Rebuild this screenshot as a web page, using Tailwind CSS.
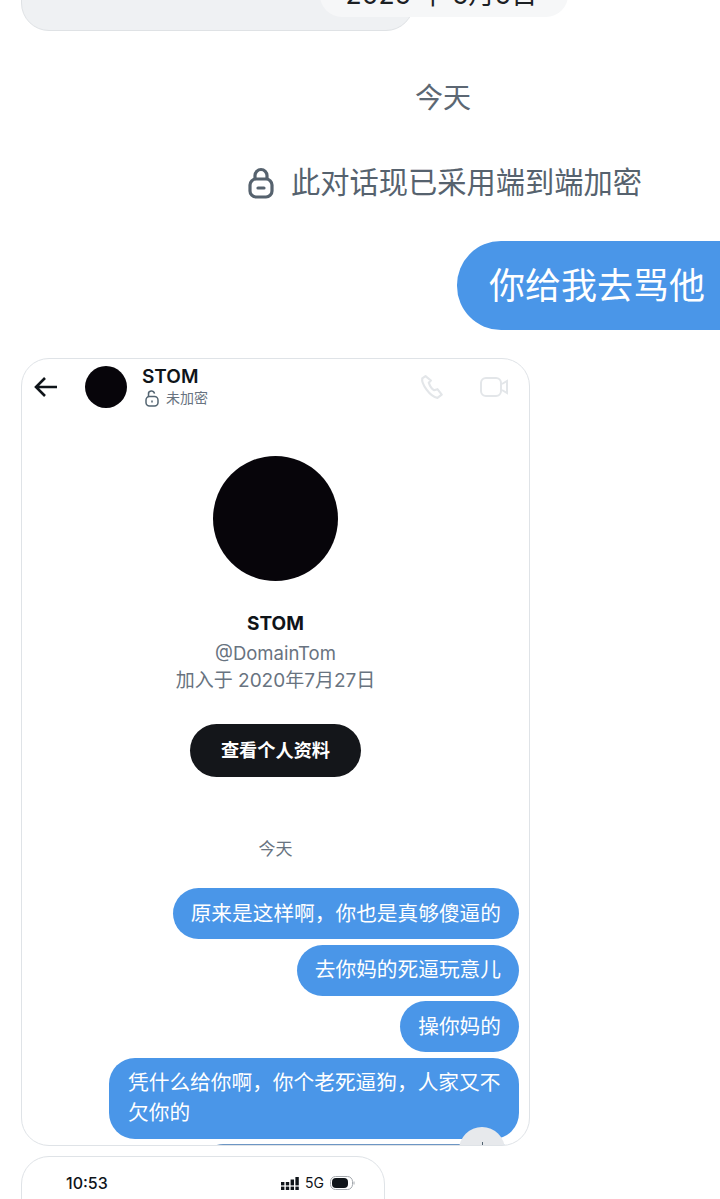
<!DOCTYPE html>
<html lang="zh">
<head>
  <meta charset="UTF-8" />
  <title>聊天记录</title>
  <script src="https://cdn.jsdelivr.net/npm/@tailwindcss/browser@4"></script>
</head>
<body class="bg-white">
  <div class="relative w-[720px] h-[1199px] overflow-hidden font-['Inter','Noto_Sans_CJK_SC',sans-serif]">

    <!-- Top screenshot card, cut off by the window -->
    <div class="relative h-[31px] mb-[49px]">
      <div class="absolute left-[21px] bottom-0 w-[393px] h-[60px] bg-[#eff1f3] border border-[#dfe2e5] rounded-b-[28px]"></div>
      <div class="absolute left-[320px] top-[-30px] w-[248px] h-[47px] bg-[#f6f7f8] rounded-[22px] flex items-center justify-center pt-[1px] pr-[5px] text-[26.5px] leading-[32px] whitespace-nowrap text-[#1c2024]">2025 年 5月5日</div>
    </div>

    <!-- Day separator -->
    <p class="pl-[415px] text-[28px] leading-[36px] text-[#5c6773]">今天</p>

    <!-- Encryption notice -->
    <div class="flex items-center gap-[17px] pl-[248px] mt-[49px] h-[36px]">
      <svg class="w-[26px] h-[32px]" viewBox="0 0 26 32" fill="none" stroke="#56626e" stroke-width="3.2">
        <path d="M7 13V8.5a6 6 0 0 1 12 0V13" />
        <rect x="2" y="12" width="22" height="18" rx="6" />
        <path d="M10 21h6" stroke-linecap="round" />
      </svg>
      <span class="text-[29.25px] leading-[36px] whitespace-nowrap text-[#56626e]">此对话现已采用端到端加密</span>
    </div>

    <!-- My bubble -->
    <div class="flex justify-end mt-[40px]">
      <div class="w-[263px] h-[89px] bg-[#4a96e8] rounded-l-[44px] flex items-center pl-[32px]">
        <span class="text-[36px] leading-[44px] text-white whitespace-nowrap">你给我去骂他</span>
      </div>
    </div>

    <!-- Embedded chat screenshot -->
    <div class="relative ml-[21px] mt-[28px] w-[509px] h-[788px] bg-white border border-[#dfe3e7] rounded-[28px] overflow-hidden">
      <!-- Header -->
      <div class="flex items-start h-[60px]">
        <svg class="w-[24px] h-[24px] ml-[12px] mt-[16px]" viewBox="0 0 24 24" fill="none" stroke="#0f1419" stroke-width="2.6">
          <path d="M23 12H2M11 3l-9 9 9 9" />
        </svg>
        <div class="w-[42px] h-[42px] rounded-full bg-[#07050a] ml-[27px] mt-[7px]"></div>
        <div class="ml-[15px] mt-[7px]">
          <p class="text-[19px] leading-[22px] font-semibold text-[#0f1419]">STOM</p>
          <div class="flex items-center gap-[7px] mt-[1px] ml-[3px]">
            <svg class="w-[14px] h-[17px]" viewBox="0 0 14 17" fill="none" stroke="#536471" stroke-width="1.5">
              <path d="M3.5 7V4.5a3 3 0 0 1 6-.8" />
              <rect x="1" y="6.5" width="12" height="9.5" rx="3.5" />
              <path d="M7 10.5v2" />
            </svg>
            <span class="text-[14px] leading-[18px] text-[#687380]">未加密</span>
          </div>
        </div>
        <div class="flex items-start gap-[34px] ml-auto pr-[20px] mt-[15px]">
          <svg class="w-[26px] h-[26px]" viewBox="0 0 24 24" fill="none" stroke="#e3e6e9" stroke-width="2">
            <path d="M6 2 3 4c-1 5 7 17 14 18l4-3-4-5-3 1c-2-1-4-4-5-7l2-2z" stroke-linejoin="round" />
          </svg>
          <svg class="w-[30px] h-[24px] mt-[1px]" viewBox="0 0 30 24" fill="none" stroke="#e3e6e9" stroke-width="2">
            <rect x="2" y="3" width="20" height="18" rx="5" />
            <path d="M23 9l5-3v12l-5-3" />
          </svg>
        </div>
      </div>

      <!-- Profile -->
      <div class="flex flex-col items-center">
        <div class="w-[125px] h-[125px] rounded-full bg-[#07050a] mt-[37px]"></div>
        <p class="mt-[30px] text-[19px] leading-[26px] font-bold text-[#0f1419]">STOM</p>
        <p class="mt-[3px] text-[18.5px] leading-[26px] text-[#687380]">@DomainTom</p>
        <p class="mt-[2px] text-[19px] leading-[26px] text-[#687380]">加入于 2020年7月27日</p>
        <div class="mt-[30px] w-[171px] h-[53px] rounded-full bg-[#14161a] flex items-center justify-center text-[18.2px] font-semibold text-white">查看个人资料</div>
        <p class="mt-[60px] text-[17px] leading-[24px] text-[#687380]">今天</p>
      </div>

      <!-- Messages -->
      <div class="flex flex-col items-end gap-[5.67px] mt-[27px] pr-[10px] text-[20.7px] leading-[30px] text-white">
        <div class="bg-[#4a96e8] rounded-[26px] h-[51px] px-[18px] flex items-center whitespace-nowrap">原来是这样啊，你也是真够傻逼的</div>
        <div class="bg-[#4a96e8] rounded-[26px] h-[51px] px-[18px] flex items-center whitespace-nowrap">去你妈的死逼玩意儿</div>
        <div class="bg-[#4a96e8] rounded-[26px] h-[51px] px-[18px] flex items-center whitespace-nowrap">操你妈的</div>
        <div class="bg-[#4a96e8] rounded-[26px] w-[410px] h-[81px] pl-[19px] pr-[17px] py-[10px]">凭什么给你啊，你个老死逼狗，人家又不欠你的</div>
        <div class="bg-[#6d96c4] rounded-t-[26px] w-[316px] h-[20px] shrink-0 -mt-[1px]"></div>
      </div>

      <!-- Scroll-down button, over the bubbles -->
      <div class="absolute right-[24px] top-[768px] w-[46px] h-[46px] rounded-full bg-[#e7e9ec] flex justify-center pt-[15px]">
        <div class="w-[1px] h-[6px] bg-[#536471]"></div>
      </div>
    </div>

    <!-- Next screenshot card, with status bar -->
    <div class="ml-[21px] mt-[10px] w-[364px] h-[60px] bg-white border border-[#dfe3e7] rounded-t-[28px] flex items-start pt-[14px]">
      <span class="ml-[44px] text-[16px] leading-[24px] font-medium text-[#0f1419]">10:53</span>
      <div class="flex items-center ml-auto mr-[29px] h-[24px]">
        <svg class="w-[18px] h-[13px]" viewBox="0 0 18 13" fill="#0f1419">
          <rect x="0" y="5" width="3.4" height="3.4" /><rect x="0" y="9.6" width="3.4" height="3.4" />
          <rect x="4.8" y="5" width="3.4" height="3.4" /><rect x="4.8" y="9.6" width="3.4" height="3.4" />
          <rect x="9.6" y="2.5" width="3.4" height="5.9" /><rect x="9.6" y="9.6" width="3.4" height="3.4" />
          <rect x="14.4" y="0" width="3.4" height="8.4" /><rect x="14.4" y="9.6" width="3.4" height="3.4" />
        </svg>
        <span class="ml-[6px] text-[14px] leading-[18px] text-[#0f1419]">5G</span>
        <svg class="ml-[6px] w-[25px] h-[14px]" viewBox="0 0 25 14" fill="none">
          <rect x="0.5" y="0.5" width="22" height="13" rx="5" stroke="#a4a9ae" />
          <rect x="2" y="2" width="16" height="10" rx="4" fill="#0f1419" />
          <path d="M24 5.5v3" stroke="#a4a9ae" />
        </svg>
      </div>
    </div>
  </div>
</body>
</html>
